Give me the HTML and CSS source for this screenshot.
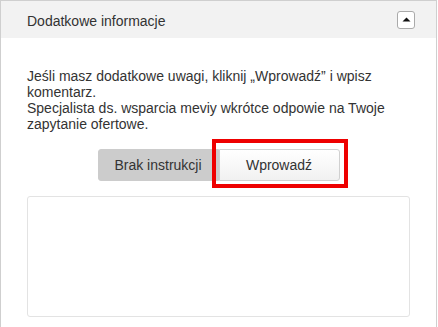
FILE: index.html
```html
<!DOCTYPE html>
<html lang="pl">
<head>
  <meta charset="UTF-8">
  <meta name="viewport" content="width=device-width, initial-scale=1.0">
  <title>Dodatkowe informacje</title>
  <link rel="stylesheet" href="styles.css">
</head>
<body>
  <div class="panel">
    <div class="panel-header">
      <span class="panel-title">Dodatkowe informacje</span>
      <button class="toggle" type="button" aria-label="Zwiń">
        <svg width="9" height="5" viewBox="0 0 9 5"><path d="M0.5 4.5 L4.5 0.5 L8.5 4.5 Z" fill="#111"/></svg>
      </button>
    </div>
    <div class="panel-body">
      <p class="info">Jeśli masz dodatkowe uwagi, kliknij „Wprowadź” i wpisz komentarz.<br>Specjalista ds. wsparcia meviy wkrótce odpowie na Twoje zapytanie ofertowe.</p>
      <div class="choice">
        <button class="choice-btn active" type="button">Brak instrukcji</button>
        <button class="choice-btn" type="button">Wprowadź<span class="highlight"></span></button>
      </div>
      <textarea class="comment"></textarea>
    </div>
  </div>
</body>
</html>
```

FILE: styles.css
```css
body {
  margin: 0;
  font-family: "Liberation Sans", Arial, sans-serif;
  color: #333;
  background-color: #fff;
}
.panel {
  width: 435px;
  height: 326px;
  border: 1px solid #cfcfcf;
  border-bottom: none;
}
.panel-header {
  display: flex;
  justify-content: space-between;
  align-items: center;
  height: 37px;
  padding: 0 21px 0 26px;
  background-color: #f2f2f2;
}
.panel-title {
  font-size: 14px;
  padding-top: 2px;
}
.toggle {
  display: flex;
  align-items: center;
  justify-content: center;
  width: 18px;
  height: 18px;
  padding: 0;
  background-color: #fff;
  border: 1px solid #aaa;
  border-radius: 3px;
}
.panel-body {
  padding: 30px 26px 0 26px;
}
.info {
  margin: 0;
  font-size: 14px;
  line-height: 16px;
}
.choice {
  display: flex;
  justify-content: center;
  margin-top: 17px;
}
.choice-btn {
  position: relative;
  width: 121px;
  height: 32px;
  font-family: "Liberation Sans", Arial, sans-serif;
  font-size: 14px;
  color: #333;
  background: linear-gradient(#ffffff, #f1f1f1);
  border: 1px solid #d0d0d0;
  border-radius: 0 3px 3px 0;
}
.choice-btn.active {
  background: #cccccc;
  border-color: #cccccc;
  border-radius: 3px 0 0 3px;
}
.highlight {
  position: absolute;
  top: -11px;
  left: -8px;
  right: -9px;
  bottom: -8px;
  border: 4px solid #ee0000;
  pointer-events: none;
}
.comment {
  display: block;
  box-sizing: border-box;
  width: 100%;
  height: 121px;
  margin-top: 15px;
  border: 1px solid #e3e3e3;
  border-radius: 3px;
  resize: none;
}
```
